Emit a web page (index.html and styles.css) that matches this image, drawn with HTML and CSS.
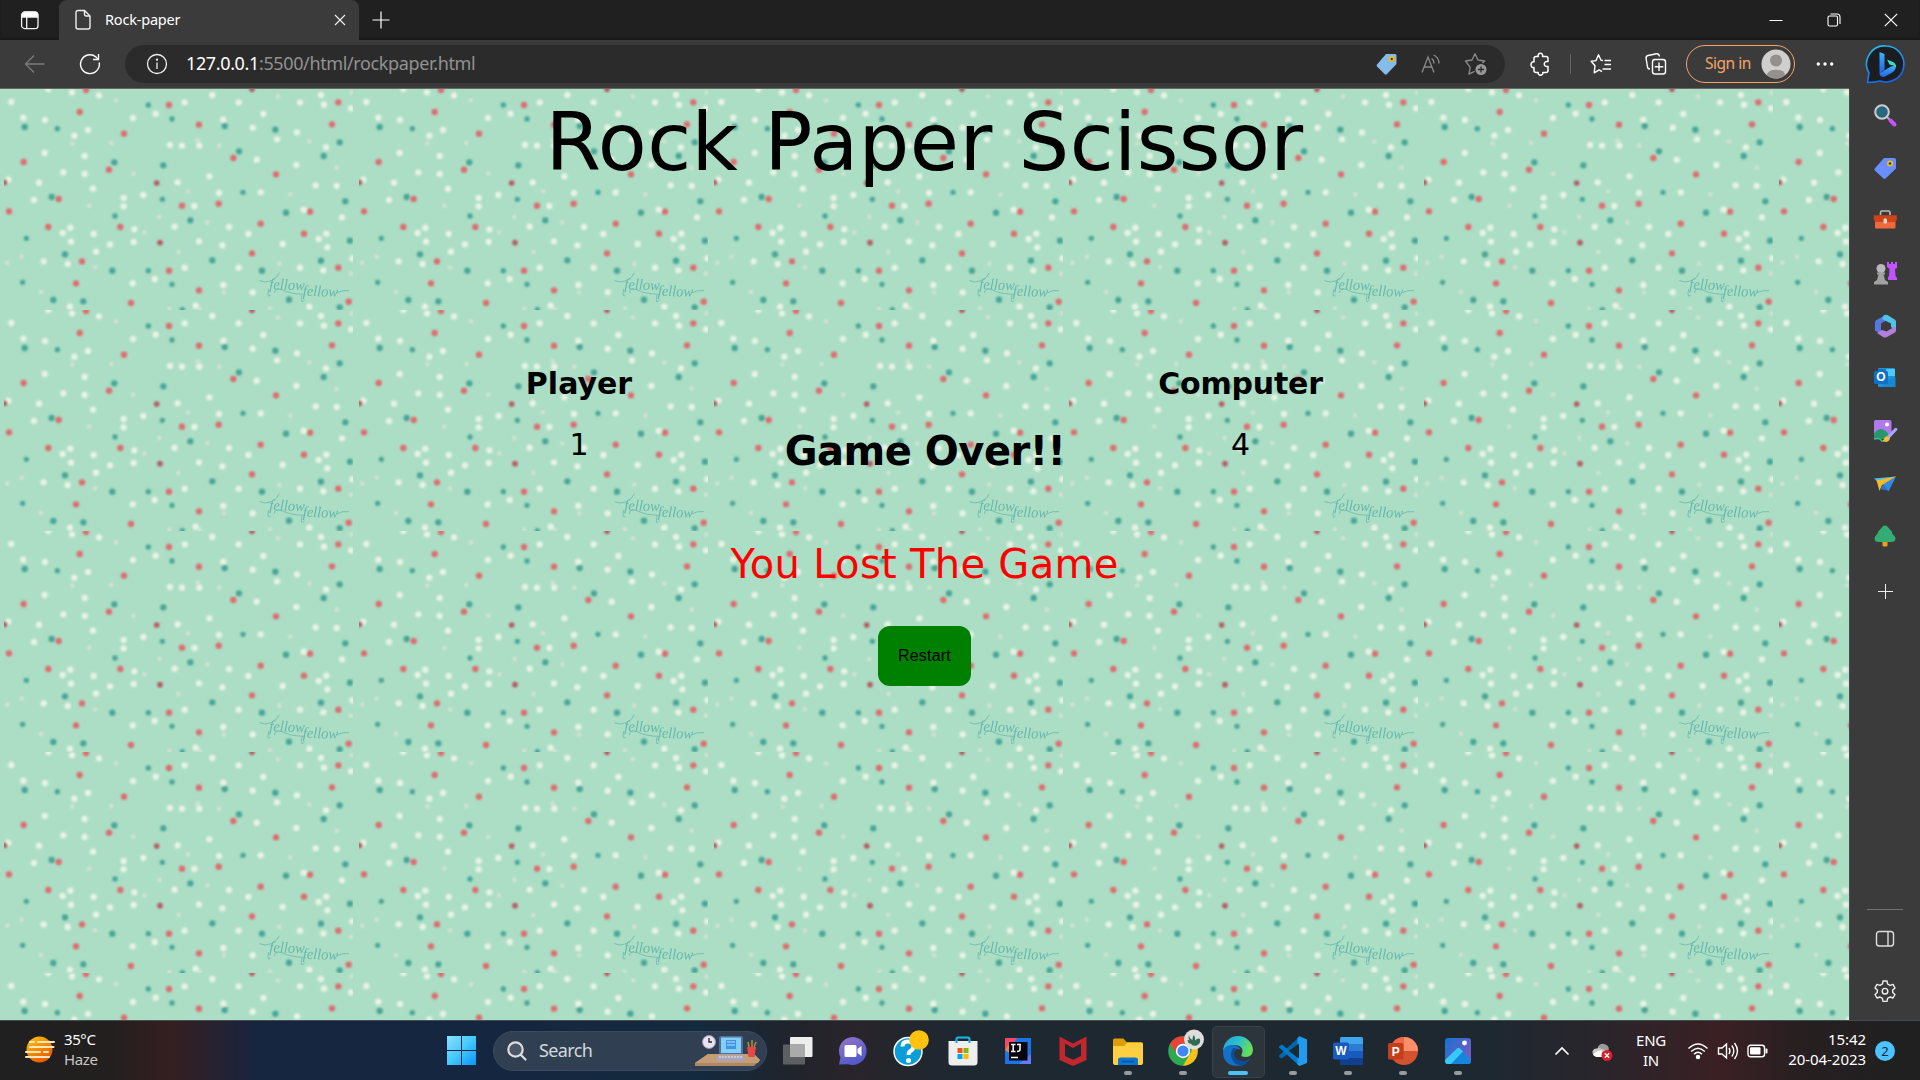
FILE: index.html
```html
<!DOCTYPE html>
<html lang="en">
<head>
<meta charset="utf-8">
<title>Rock-paper</title>
<link rel="stylesheet" href="styles.css">
</head>
<body>
<div class="desktop">
  <header class="tabbar">
    <div class="tab-actions"><svg width="20" height="20" viewBox="0 0 20 20" fill="none" stroke="#f4f4f4" stroke-width="1.3"><rect x="1.6" y="2.2" width="16.4" height="16.4" rx="3.2"/><path d="M2 7V5a3 3 0 0 1 3-3h9.600a3 3 0 0 1 3 3v2z" fill="#fff"/><path d="M6.700 7v11"/></svg></div>
    <div class="tab">
      <svg width="18" height="22" viewBox="0 0 18 22" fill="none" stroke="#eee" stroke-width="1.400"><path d="M4 1.500h6.500l5.500 5.500v11a2 2 0 0 1-2 2H4a2 2 0 0 1-2-2V3.500a2 2 0 0 1 2-2z"/><path d="M10.500 1.500V5.500a1.500 1.500 0 0 0 1.500 1.500h4"/></svg>
      <span class="tab-title">Rock-paper</span>
      <svg class="tab-close" width="12" height="12" viewBox="0 0 12 12" stroke="#eee" stroke-width="1.200"><path d="M1 1l10 10M11 1L1 11"/></svg>
    </div>
    <svg class="new-tab" width="18" height="18" viewBox="0 0 18 18" stroke="#fff" stroke-width="1.200"><path d="M9 .5v17M.5 9h17"/></svg>
    <div class="window-controls">
      <svg width="14" height="14" viewBox="0 0 14 14" stroke="#fff" stroke-width="1"><path d="M.5 7.500h13"/></svg>
      <svg width="14" height="14" viewBox="0 0 14 14" fill="none" stroke="#fff" stroke-width="1.100"><rect x="1" y="3" width="9.500" height="10" rx="1.500"/><path d="M3.500 1h6.500a3 3 0 0 1 3 3v7"/></svg>
      <svg width="14" height="14" viewBox="0 0 14 14" stroke="#fff" stroke-width="1.200"><path d="M.8 .8l12.400 12.400M13.200 .8L.8 13.200"/></svg>
    </div>
  </header>

  <nav class="toolbar">
    <svg class="back" width="22" height="20" viewBox="0 0 22 20" fill="none" stroke="#7c7c7c" stroke-width="1.300"><path d="M20.500 10H1.500M10 1.500L1.500 10l8.500 8.500"/></svg>
    <svg class="reload" width="22" height="22" viewBox="0 0 22 22" fill="none" stroke="#fff" stroke-width="1.400"><path d="M20.200 9.500A9.400 9.400 0 1 1 17 4l2 2"/><path d="M19.500 1v5.500h-5.500"/></svg>
    <div class="address">
      <svg width="22" height="22" viewBox="0 0 22 22" fill="none" stroke="#eee" stroke-width="1.300"><circle cx="11" cy="11" r="9.500"/><path d="M11 9.500v6.500"/><circle cx="11" cy="6.700" r=".5" fill="#eee"/></svg>
      <span class="url"><b>127.0.0.1</b>:5500/html/rockpaper.html</span>
      <div class="address-icons">
        <svg width="22" height="22" viewBox="0 0 22 22"><path d="M10 1h9a1.500 1.500 0 0 1 1.500 1.500v8.500L10.500 21.500Q9.500 22 8.500 21L1 13.500Q.2 12.500 1 11.500z" fill="#86bce9"/><circle cx="15.800" cy="6" r="2.900" fill="#f3b614"/><circle cx="15.800" cy="6" r="1.100" fill="#222"/></svg>
        <svg width="20" height="20" viewBox="0 0 20 20" fill="none" stroke="#8b8b8b" stroke-width="1.300"><path d="M1 18.500L7 3l6 15.500M3.200 13h7.600"/><path d="M10.500 4.500q2.500 1.500 2.500 5M12.500 1q5.500 2.500 5.500 8.500"/></svg>
        <svg width="24" height="24" viewBox="0 0 24 24"><path d="M11 1.800l3 6.200 6.600 1-4.800 4.700-.8 7.800-4-2.400-6 3 1.200-6.700L1.500 9 8 8z" fill="none" stroke="#8b8b8b" stroke-width="1.300" stroke-linejoin="round"/><circle cx="17" cy="17.500" r="6.800" fill="#2b2b2b"/><circle cx="17" cy="17.500" r="5.500" fill="#999"/><path d="M17 14.500v6M14 17.500h6" stroke="#2b2b2b" stroke-width="1.300"/></svg>
      </div>
    </div>
    <svg class="puzzle" width="20" height="24" viewBox="0 0 20 24" fill="none" stroke="#fff" stroke-width="1.500" stroke-linejoin="round"><path d="M4 6.500Q4 4.500 6 4.500H8.300C6.700 .3 14 .3 12.500 4.500H16Q18 4.500 18 6.500V9.500C13 8.500 13 15.500 18 14.500V18.500Q18 20.500 16 20.500H12.800C13.500 24 7.500 24 8.200 20.500H6Q4 20.500 4 18.500V15.500C0 16.500 0 8.800 4 9.800z"/></svg>
    <i class="divider"></i>
    <svg class="favorites" width="22" height="22" viewBox="0 0 22 22" fill="none" stroke="#fff" stroke-width="1.400" stroke-linejoin="round"><path d="M13 7.500l-2-.3-2.500-5.400L6 7.600 1.200 8.200 5 12.700 4.200 19.800l5-2.900 2.800 1.800M14.500 7.500h6.500M14.500 11.500h6.500M12.500 16h8.500"/></svg>
    <svg class="collections" width="22" height="24" viewBox="0 0 22 24" fill="none" stroke="#fff" stroke-width="1.400"><path d="M5 17Q2.500 17 2.400 14.500L1.100 6.500Q.8 4 3 3.500L11.500 1.700Q14 1.500 14.500 4.500"/><rect x="7.500" y="7.500" width="13" height="14.500" rx="2.500"/><path d="M14 10.500v8.500M9.800 14.700h8.500"/></svg>
    <div class="signin"><span>Sign in</span><svg width="30" height="30" viewBox="0 0 30 30"><circle cx="15" cy="15" r="14.500" fill="#d1cfcd"/><circle cx="15" cy="11.500" r="6" fill="#93908d"/><path d="M5.500 26a9.800 7 0 0 1 19 0 14.500 14.500 0 0 1-19 0z" fill="#93908d"/></svg></div>
    <svg class="more" width="18" height="4" viewBox="0 0 18 4" fill="#fff"><circle cx="2.300" cy="2" r="1.700"/><circle cx="9" cy="2" r="1.700"/><circle cx="15.700" cy="2" r="1.700"/></svg>
    <svg class="bing" width="40" height="40" viewBox="0 0 40 40"><defs><linearGradient id="bingRing" x1="0" y1="0" x2=".4" y2="1"><stop offset="0" stop-color="#20c8f5"/><stop offset="1" stop-color="#1766e8"/></linearGradient><linearGradient id="bingB" x1="0" y1="0" x2="0" y2="1"><stop offset="0" stop-color="#3bb4ff"/><stop offset="1" stop-color="#2360e8"/></linearGradient></defs><path d="M20 2A18 18 0 1 1 14 37Q8 38.500 1.500 38.500L3 29A18 18 0 0 1 20 2z" fill="#1c1d20" stroke="url(#bingRing)" stroke-width="1.600"/><path d="M13.500 8l5 2v16l-5 3.500z" fill="url(#bingB)"/><path d="M13.500 29.500l11.500-7 5-1q0 5-4.500 7.500L18 33q-4 0-4.500-3.500z" fill="url(#bingB)"/><path d="M21 15.500l6 2.500q3.500 2 3 5.500-1-2-5-2.500l-1.500-.5z" fill="#37e0c8"/></svg>
  </nav>

  <div class="browser-body">
    <main class="game">
      <svg class="confetti" width="1849" height="931" aria-hidden="true">
        <defs>
          <filter id="soft" x="0" y="0" width="1" height="1"><feGaussianBlur stdDeviation="2.600"/></filter>
          <pattern id="tile" width="1065" height="663" patternUnits="userSpaceOnUse" patternTransform="scale(.333333)">
            <rect width="1065" height="663" fill="#abdec5"/>
            <g id="dots" stroke-linecap="round" fill="none" filter="url(#soft)">
              <path class="dot cream" d="M145 0h0M297 19h0M34 39h0M216 10h0M554 40h0M637 18h0M716 40h0M900 40h0M963 18h0M972 47h0M1053 58h0M467 74h0M399 87h0M790 75h0M70 86h0M135 93h0M264 123h0M223 140h0M670 92h0M758 116h0M891 130h0M831 151h0M134 192h0M254 201h0M510 168h0M546 170h0M598 170h0M770 212h0M889 228h0M190 250h0M254 255h0M25 272h0M117 281h0M279 299h0M371 327h0M371 352h0M430 318h0M533 280h0M628 262h0M657 312h0M782 310h0M947 289h0M1010 291h0M102 333h0M583 351h0M524 413h0M211 416h0M188 432h0M281 435h0M403 421h0M401 459h0M330 466h0M213 458h0M745 435h0M687 414h0M911 362h0M1026 385h0M979 434h0M956 450h0M982 475h0M597 457h0M667 469h0M848 465h0M288 488h0M131 517h0M203 525h0M716 536h0M900 536h0M554 536h0M970 544h0M1057 508h0M398 583h0M670 588h0M758 610h0M464 570h0M210 653h0M587 650h0M928 653h0M978 175h0"/>
              <path class="dot small" d="M348 34h0M1055 10h0M834 22h0M217 163h0M334 162h0M593 154h0M658 170h0M400 254h0M564 307h0M871 316h0M1010 236h0M928 157h0M268 350h0M478 384h0M433 430h0M535 489h0M622 400h0M22 521h0M65 503h0M285 535h0M838 524h0M1053 554h0M123 609h0M672 610h0M508 660h0M810 658h0M600 660h0"/>
              <path class="dot coral" d="M258 3h0M507 48h0M1015 40h0M239 69h0M372 134h0M597 107h0M996 106h0M71 219h0M327 242h0M700 207h0M828 256h0M176 330h0M546 350h0M656 344h0M27 367h0M930 368h0M782 404h0M145 414h0M361 414h0M912 434h0M756 493h0M246 517h0M507 545h0M1015 536h0M228 583h0M597 604h0M393 642h0M1046 638h0"/>
              <path class="dot wine" d="M470 282h0M480 461h0M14 280h0M756 1h0"/>
              <path class="dot teal" d="M343 220h0M490 229h0M674 111h0M74 114h0M826 122h0M1019 160h0M717 187h0M971 201h0M155 324h0M1036 337h0M858 371h0M571 394h0M1050 455h0M195 496h0M637 514h0M963 515h0M337 545h0M786 545h0M250 637h0M867 632h0M1019 655h0M160 633h0"/>
              <path class="dot teal mini" d="M445 48h0M516 90h0M172 119h0M487 331h0M729 310h0M345 381h0M79 448h0M445 545h0M516 586h0M68 580h0M547 662h0"/>
            </g>
            <g class="wordmark">
              <text x="808" y="600" textLength="106" lengthAdjust="spacingAndGlyphs" transform="rotate(2 808 600)">fellow</text>
              <text x="908" y="620" textLength="106" lengthAdjust="spacingAndGlyphs" transform="rotate(2 908 620)">fellow</text>
              <path d="M778 575q18 8 36 0t24-24M824 612q-2-16 22-10 26 14 70 14M1010 612q16-10 37-7M806 600q-6 30 6 18M906 618q-6 32 8 14" fill="none" stroke="#66b8ac" stroke-width="2.400"/>
            </g>
          </pattern>
        </defs>
        <rect width="1849" height="931" fill="url(#tile)"/>
      </svg>
      <div class="board">
        <h1>Rock Paper Scissor</h1>
        <div class="scores">
          <section class="score"><h2 class="player">Player</h2><p>1</p></section>
          <h2 class="over">Game Over!!</h2>
          <section class="score"><h2 class="computer">Computer</h2><p>4</p></section>
        </div>
        <p class="result">You Lost The Game</p>
        <button class="restart">Restart</button>
      </div>
    </main>

    <aside class="sidebar">
      <svg viewBox="0 0 24 24"><path d="M14 14l3 3" stroke="#aaa" stroke-width="2"/><circle cx="9" cy="9" r="6.800" fill="#2b6681" stroke="#c9cdcf" stroke-width="2"/><path d="M17.500 17.500l4 4" stroke="#c653ff" stroke-width="4" stroke-linecap="round"/></svg>
      <svg viewBox="0 0 24 24"><path d="M11 2h10q2 0 2 2v8.500L12.500 22.500q-1 .8-2 0L1.800 14.500q-1-1 0-2z" fill="#6b8eff"/><circle cx="17" cy="7.500" r="3" fill="#f2c10f"/><circle cx="17" cy="7.500" r="1.300" fill="#333"/></svg>
      <svg viewBox="0 0 24 24"><path d="M7.500 7V4.500Q7.500 3 9 3h6.500Q17 3 17 4.500V7" fill="none" stroke="#bbb" stroke-width="1.600"/><rect x="2" y="9" width="20.500" height="11.500" rx="1" fill="#f0693d"/><path d="M.8 7.300h23V12l-2 2H3l-2.200-2z" fill="#cf4317"/><rect x="10.500" y="10.500" width="3.500" height="5" rx="1" fill="#d6d6d6"/></svg>
      <svg viewBox="0 0 24 24"><path d="M14 1h2v2h2V1h2v2h2V1h2v6l-2 1 .5 7 1.500 2v2h-9v-3l1-1 .5-7-2.500-2z" fill="#c154ff"/><circle cx="8" cy="7.500" r="4.500" fill="#b8b8b8"/><path d="M4 11.500h8v2h-1.500L12 19l3 2v2.500H1V21l3-2 1.500-5.500H4z" fill="#a2a2a2"/></svg>
      <svg viewBox="0 0 24 24"><path d="M13 .8L3 6.200Q2 7 2 8.500v8L9 21l2-1.500-3-3V9.500l5-3z" fill="#5878df"/><path d="M11 1l3-.2 8 5q1 .8 1 2V16l-5-3V9.500L9 5z" fill="#4fc3e8"/><path d="M23 13v3.500q0 1.200-1 2l-8.500 4.700q-1.500.6-3 0L4 19l5-3 4.500 1.500 5-3z" fill="#b47edb"/></svg>
      <svg viewBox="0 0 24 24"><rect x="5" y="2" width="17" height="19" rx="1" fill="#1c93dd"/><path d="M5 3h8v7H5z" fill="#1474bd"/><path d="M13 3h9v7h-9z" fill="#4fc8f4"/><path d="M13 13.500l9.500-2V21H9z" fill="#1689d3"/><rect x="1" y="5" width="14" height="13" rx="1.500" fill="#0f70c8"/><text x="8" y="15.200" class="glyph">O</text></svg>
      <svg viewBox="0 0 24 24"><rect x="1" y="1" width="17.500" height="17" rx="2" fill="#b279ec"/><circle cx="14" cy="5.500" r="2" fill="#fff"/><path d="M1 15q7-11 16 2v3H1z" fill="#25976a"/><path d="M1 20q5-1.500 7 1t3 0" fill="none" stroke="#3ac487" stroke-width="1.500"/><path d="M14 17l8-8q1-.8 2 .2t0 2l-7.500 8z" fill="#a8a5ff"/><path d="M10 22q2-6 5-4.500t1 4-6 .5z" fill="#f6bd35"/></svg>
      <svg viewBox="0 0 24 24"><path d="M1 6.500L23 4.500 7 12z" fill="#4bc0f5"/><path d="M23 4.500L15.500 19.500 9 12z" fill="#318be6"/><path d="M3.500 8.500L23 4.500 9 13l-2.500 6z" fill="#f4bb27"/><path d="M7 17l3-4 4.500 5.500z" fill="#2876ce"/></svg>
      <svg viewBox="0 0 24 24"><path d="M9.500 17h5v4.500q0 1-1 1h-3q-1 0-1-1z" fill="#f19d19"/><path d="M12 1.500c2 0 3 1.500 4 3s3 2 3 4 3.500 3.500 3.500 6-2 3.500-4 3.500h-13c-2 0-4-1-4-3.500s3-4 3.500-6 2-2.500 3-4 2-3 4-3z" fill="#32ae74"/></svg>
      <svg class="add" viewBox="0 0 24 24" stroke="#eee" stroke-width="1"><path d="M12.500 5v15M5 12.500h15"/></svg>
      <div class="sidebar-bottom">
        <svg viewBox="0 0 24 24" fill="none" stroke="#ddd" stroke-width="1.400"><rect x="3.500" y="4.500" width="17" height="14.500" rx="2.800"/><path d="M15 5v14"/></svg>
        <svg viewBox="0 0 24 24" fill="none" stroke="#eee" stroke-width="1.400" stroke-linejoin="round"><path d="M10 2h4l.6 3 2.400 1.400 3-1 2 3.600-2.300 2v2.500l2.300 2-2 3.500-3-1-2.400 1.400-.6 3h-4l-.6-3L7 18l-3 1-2-3.500 2.300-2V11L2 9l2-3.600 3 1L9.400 5z"/><circle cx="12" cy="12.200" r="2.800"/></svg>
      </div>
    </aside>
  </div>

  <footer class="taskbar">
    <div class="weather">
      <svg width="32" height="28" viewBox="0 0 32 28"><defs><linearGradient id="sun" x1="0" y1="0" x2=".6" y2="1"><stop offset="0" stop-color="#ffc800"/><stop offset="1" stop-color="#e85a00"/></linearGradient></defs><circle cx="15.500" cy="12.500" r="13" fill="url(#sun)"/><path d="M6 5h4M14 5h16M6 10h23.500M2 15h14M20 15h4M2 20h23" stroke="#fbe6bd" stroke-width="2.100" stroke-linecap="round"/></svg>
      <div class="weather-text"><div>35°C</div><div class="muted">Haze</div></div>
    </div>
    <svg class="start" width="29" height="29" viewBox="0 0 29 29"><defs><linearGradient id="win" x1="0" y1="0" x2="29" y2="29" gradientUnits="userSpaceOnUse"><stop offset="0" stop-color="#8be0ff"/><stop offset=".5" stop-color="#45c8fc"/><stop offset="1" stop-color="#0a95fc"/></linearGradient></defs><path d="M0 0h14v14H0zM15 0h14v14H15zM0 15h14v14H0zM15 15h14v14H15z" fill="url(#win)"/></svg>
    <div class="search">
      <svg width="20" height="20" viewBox="0 0 20 20" fill="none" stroke="#ddd" stroke-width="2.200"><circle cx="8.500" cy="8.500" r="7.200" fill="#4a5767"/><path d="M13.500 13.500l5 5" stroke-linecap="round"/></svg>
      <span>Search</span>
      <svg class="desk" width="66" height="32" viewBox="0 0 66 32"><path d="M0 28L13 19H59l6 6-6 6H0z" fill="#ae8865"/><path d="M13 19h46l6 6-2 3H0z" fill="#c49d75"/><circle cx="14" cy="7" r="6.500" fill="#e9e4ef" stroke="#9d92ba"/><path d="M14 3v4h3" stroke="#222" fill="none" stroke-width="1.300"/><rect x="24" y="1" width="24" height="18" rx="1.500" fill="#566f94"/><rect x="26" y="2.500" width="20" height="15.500" fill="#7fd0fb"/><path d="M31 5h10v9H31z" fill="#4097df"/><path d="M32 7h8M32 10h8" stroke="#b5e2ff"/><path d="M23 20h26l1 6H21z" fill="#a9a3bc"/><path d="M24 22h23" stroke="#eee" stroke-dasharray="2 1"/><path d="M54 12l-1-5M57 12V5M59 12l2-5" stroke="#b68f35" stroke-width="1.500"/><path d="M52 12h9l-1.500 10h-6z" fill="#e84545"/></svg>
    </div>
    <div class="apps">
      <div class="app"><svg viewBox="0 0 30 30"><rect x="7" y="1" width="22.500" height="20" rx="1" fill="#eee"/><rect x="0" y="8.500" width="22" height="20" rx="1" fill="#5c6063"/><path d="M7 8.500h15V21H7z" fill="#a9aaab"/></svg></div>
      <div class="app"><svg viewBox="0 0 30 30"><defs><linearGradient id="chat" x1="0" y1="0" x2=".5" y2="1"><stop offset="0" stop-color="#9476c8"/><stop offset="1" stop-color="#5059c9"/></linearGradient></defs><path d="M15 1a14 14 0 1 1-5 27.200L1 28.500l1.500-7A14 14 0 0 1 15 1z" fill="url(#chat)"/><path d="M8 9h9q1.500 0 1.500 1.500v9Q18.500 21 17 21H8q-1.500 0-1.500-1.500v-9Q6.500 9 8 9zM19.500 13l4-3v10l-4-3z" fill="#fff"/></svg></div>
      <div class="app"><svg viewBox="0 0 30 30"><circle cx="15" cy="15.500" r="14" fill="#099dd9" stroke="#fff" stroke-width="1.500"/><path d="M9.500 10.500q0-5 5.500-5t5.500 4.700q0 3-3 4.800-2 1.300-2 4" fill="none" stroke="#fff" stroke-width="4"/><circle cx="15.500" cy="24.500" r="2.500" fill="#fff"/><circle cx="26" cy="4" r="9.800" fill="#ffc20f"/></svg></div>
      <div class="app"><svg viewBox="0 0 30 30"><path d="M8.500 6V3q0-1.500 1.500-1.500h10q1.500 0 1.500 1.500v3" fill="none" stroke="#1db7ee" stroke-width="2"/><path d="M.5 5h29v21q0 3.500-3.500 3.500H4Q.5 29.500.5 26z" fill="#eee"/><path d="M8.500 7V4M21.500 7V4" stroke="#0ba2dd" stroke-width="2"/><path d="M9.500 12h5v5h-5z" fill="#f25022"/><path d="M15.500 12h5v5h-5z" fill="#7fba00"/><path d="M9.500 18h5v5h-5z" fill="#00a4ef"/><path d="M15.500 18h5v5h-5z" fill="#ffb900"/></svg></div>
      <div class="app"><svg viewBox="0 0 30 30"><path d="M2 2h26v26H2z" fill="#1b74e8"/><path d="M2 2h12L5 16 2 12z" fill="#f34969"/><path d="M2 14l4-6v9z" fill="#ee8540"/><path d="M16 28h12V18z" fill="#647bf4"/><path d="M6 6h18.500v18.500H6z" fill="#08050d"/><path d="M8 8.500h4.500M10.200 8.500v7M8 15.500h4.500M14 8.500h4M17 8.500v5q0 2-3 2M8 21.500h7" stroke="#fff" stroke-width="1.500" fill="none"/></svg></div>
      <div class="app"><svg viewBox="0 0 30 30"><path d="M1.500 .5L15 7.500 28.500 .5V24L15 30 1.500 24zM7 7.500V20l8 3.800L23 20V7.500L15 12z" fill="#c1272d" fill-rule="evenodd"/></svg></div>
      <div class="app on"><svg viewBox="0 0 30 30"><path d="M0 4q0-1.500 1.500-1.500h9l3 3.500H28q2 0 2 2v4H0z" fill="#dc9d08"/><path d="M0 10h11l3-3h14.500Q30 7 30 8.500V27q0 2-2 2H2q-2 0-2-2z" fill="#ffcf42"/><path d="M5 29v-5q0-2.500 2.500-2.500h15q2.500 0 2.500 2.500v5z" fill="#0f76cf"/><path d="M9 25.500h12" stroke="#09569c" stroke-width="1.500"/></svg></div>
      <div class="app on"><svg viewBox="0 0 30 30"><circle cx="15" cy="15" r="14.800" fill="#2da94f"/><path d="M15 .2A14.800 14.800 0 0 1 27.800 7.600H15a7.400 7.400 0 0 0-6.400 11.100L2.200 7.600A14.800 14.800 0 0 1 15 .2z" fill="#ea4335"/><path d="M27.800 7.600a14.800 14.800 0 0 1-12.800 22.200l6.400-11.100a7.400 7.400 0 0 0 0-11.100z" fill="#fbc116"/><circle cx="15" cy="15" r="7.200" fill="#fff"/><circle cx="15" cy="15" r="5.600" fill="#4285f4"/><circle cx="26" cy="3.500" r="10" fill="#dedddd"/><path d="M21-1.500q0 4 3.500 5.500 0-4 1.500-5 1.500 3 1 5.500 3-3 5-1.500 1 5-3.500 6.500-4 1-5.500-1.500-3-.5-3.500-3.500 1-1 2 0-1.500-3-.5-6z" fill="#316b52"/></svg></div>
      <div class="app on active"><svg viewBox="0 0 30 30"><defs><linearGradient id="edgeTop" x1="0" y1="0" x2="1" y2=".35"><stop offset="0" stop-color="#239fe1"/><stop offset=".55" stop-color="#2dc2c8"/><stop offset="1" stop-color="#67dd58"/></linearGradient></defs><path d="M15 0A15 15 0 0 1 30 14q-.5 7-7 7-5.500 0-4.500-2.500 2-3.500 0-6.500-2-3-6.500-3Q4 9 0 15A15 15 0 0 1 15 0z" fill="url(#edgeTop)"/><path d="M0 15q2-6 9.500-6 6 0 8 4.500-4-1.500-6 1.500-2.500 4 1 8.500 6 5 14 0Q22 30 15 30 0 30 0 15z" fill="#1471c8"/><path d="M10 12q-4 7 0 13 2.500 4 8 4.800Q24 28 27 23q-7 3.500-12.500.5-4.500-3.500-3.500-8 1-2.500 3-3z" fill="#0e4d95"/></svg></div>
      <div class="app on"><svg viewBox="0 0 30 30"><path d="M1 19.500L21.500 .5 22.500 7 4 22.500 1 21z" fill="#0065a9"/><path d="M1 10.500l3-2L22.500 24l-1 6L1 11.500z" fill="#007acc"/><path d="M21.500 .2L29 3.500v23.500l-7.500 3-2-1.500V2z" fill="#1f9cf0"/><path d="M11 15l10-7.500v15z" fill="#1e2830"/></svg></div>
      <div class="app on"><svg viewBox="0 0 30 30"><rect x="7" y="1" width="23" height="28" rx="1.500" fill="#185abd"/><path d="M7 2.500Q7 1 8.500 1H28.500Q30 1 30 2.500V8H7z" fill="#41a5ee"/><path d="M7 8h23v7H7z" fill="#2b7cd3"/><path d="M7 22h23v5.500Q30 29 28.500 29h-20Q7 29 7 27.500z" fill="#103f91"/><rect x="0" y="6.500" width="16" height="17" rx="1.500" fill="#185abd"/><text x="8" y="19" class="glyph">W</text></svg></div>
      <div class="app on"><svg viewBox="0 0 30 30"><circle cx="16" cy="15" r="14" fill="#d35230"/><path d="M16 1v14h14A14 14 0 0 0 16 1z" fill="#ff8f6b"/><path d="M16 1A14 14 0 0 0 2 15h14z" fill="#ed6c47"/><rect x="0" y="7" width="15.500" height="16.500" rx="1.500" fill="#c43e1c"/><text x="7.700" y="19.500" class="glyph">P</text></svg></div>
      <div class="app on"><svg viewBox="0 0 30 30"><defs><linearGradient id="photo" x1="0" y1="0" x2="1" y2=".8"><stop offset="0" stop-color="#1374d1"/><stop offset="1" stop-color="#7e58c2"/></linearGradient></defs><rect x="2" y="2" width="26" height="26" rx="3" fill="url(#photo)"/><circle cx="21.500" cy="7" r="2.400" fill="#fff"/><path d="M2 24L14 12.500q1.500-1.500 3 0L28 24v1q0 3-3 3H5q-3 0-3-3z" fill="#1685dd"/><path d="M2 24L14 12.500q1.500-1.500 3 0l3 3L8 28H5q-3 0-3-3z" fill="#38c9f5"/></svg></div>
    </div>
    <div class="tray">
      <svg width="16" height="10" viewBox="0 0 16 10" fill="none" stroke="#fff" stroke-width="1.700"><path d="M1.500 8.500L8 2l6.500 6.500"/></svg>
      <svg class="cloud" width="22" height="20" viewBox="0 0 22 20"><path d="M4 15q-4-1-3.500-4.500Q1.500 7 5.500 7.500 8 2 13 4q4 1.500 3 6z" fill="#c9c9c9"/><path d="M5.500 6.500q3-5.500 8-3t2.500 6.500z" fill="#999"/><path d="M1 14q4-5 9-4v6H4z" fill="#fff"/><circle cx="15" cy="14.500" r="5.500" fill="#dc1c2b"/><path d="M12.800 12.300l4.400 4.400M17.200 12.300l-4.400 4.400" stroke="#fff" stroke-width="1.400"/></svg>
      <div class="lang"><div>ENG</div><div>IN</div></div>
      <svg class="wifi" width="22" height="18" viewBox="0 0 22 18" fill="none" stroke="#fff" stroke-width="1.500"><path d="M1.500 6.500q9.500-9 19 0M4.200 9.500q6.800-6.500 13.600 0M7 12.300q4-4 8 0"/><circle cx="11" cy="15" r="1.500" fill="#fff"/></svg>
      <svg class="volume" width="22" height="20" viewBox="0 0 22 20" fill="none" stroke="#fff" stroke-width="1.400"><path d="M1.500 7h3.500l4.500-4v14L5 13H1.500zM12 7q2 3 0 6M14.800 4.500q4 5.500 0 11M17.500 2q6 8 0 16"/></svg>
      <svg class="battery" width="21" height="14" viewBox="0 0 21 14"><rect x="1" y="1.200" width="16.500" height="11.500" rx="2.500" fill="none" stroke="#fff" stroke-width="1.400"/><rect x="3" y="3.300" width="10.500" height="7.300" rx="1" fill="#fff"/><path d="M18.500 4.500h1q1 0 1 1v3q0 1-1 1h-1z" fill="#fff"/></svg>
      <div class="clock"><div>15:42</div><div class="date">20-04-2023</div></div>
      <span class="count">2</span>
    </div>
  </footer>
</div>
</body>
</html>
```
FILE: styles.css
```css
* { box-sizing: border-box; }
body { margin: 0; background: #202020; font-family: "Noto Sans", "Open Sans", sans-serif; color: #fff; }
h1, h2, p { margin: 0; }
svg { display: block; flex: none; overflow: visible; }
.desktop { width: 1920px; height: 1080px; display: flex; flex-direction: column; overflow: hidden; }

.tabbar { height: 40px; display: flex; align-items: center; background: #202020; box-shadow: inset 0 -2px 2px #191919; }
.tab-actions { width: 59px; padding-left: 20px; }
.tab { width: 300px; height: 40px; display: flex; align-items: center; background: #3b3b3b; border-radius: 8px 8px 0 0; padding: 0 13px 0 15px; }
.tab-title { margin: -2px 0 0 13px; font-size: 14.500px; letter-spacing: -.2px; line-height: 20px; }
.tab-close { margin-left: auto; }
.new-tab { margin-left: 13px; }
.window-controls { display: flex; gap: 43.500px; margin-left: auto; padding-right: 22px; }

.toolbar { height: 49px; display: flex; align-items: center; background: #3b3b3b; padding-bottom: 1px; }
.back { margin-left: 24px; }
.reload { margin-left: 33px; }
.address { width: 1380px; height: 38px; margin-left: 24px; padding-left: 21px; display: flex; align-items: center; border-radius: 19px; background: #2b2b2b; }
.url { margin: -2px 0 0 18px; color: #929292; font-size: 18px; line-height: 24px; letter-spacing: -.37px; }
.url b { color: #fff; font-weight: 400; }
.address-icons { display: flex; align-items: center; gap: 23px; margin-left: auto; padding-right: 17px; }
.puzzle { margin-left: 25px; }
.divider { width: 1px; height: 20px; margin-left: 20px; background: #666; }
.favorites { margin-left: 19px; }
.collections { margin-left: 33px; }
.signin { width: 109px; height: 38px; margin-left: 19px; padding: 0 3px 0 18px; display: flex; align-items: center; justify-content: space-between; border: 1.500px solid #f4a469; border-radius: 19px; color: #f4a469; font-size: 15.500px; letter-spacing: -.5px; }
.signin span { margin-top: -2px; }
.more { margin-left: 21px; }
.bing { margin-left: 32px; }

.browser-body { height: 932px; display: flex; }
.game { position: relative; width: 1849px; height: 932px; border-top: 1px solid #686868; margin-top: -1px; color: #000; font-family: "DejaVu Sans", Verdana, sans-serif; }
.confetti { position: absolute; inset: 0; }
.dot { stroke: #e9f3e4; stroke-width: 19; }
.dot.small { stroke: #d9e2d0; stroke-width: 13; }
.dot.coral { stroke: #de6c70; stroke-width: 19; }
.dot.wine { stroke: #b65c67; stroke-width: 17; }
.dot.teal { stroke: #48a596; stroke-width: 19; }
.dot.mini { stroke-width: 16; }
.wordmark text { font: italic 46px "Liberation Serif", serif; fill: #66b8ac; }
.board { position: relative; height: 931px; display: flex; flex-direction: column; align-items: center; }
h1 { height: 100px; margin-top: 4px; font-size: 80px; line-height: 100px; font-weight: 400; letter-spacing: .4px; white-space: nowrap; }
.scores { width: 797px; height: 199px; margin-top: 171px; display: grid; grid-template-columns: 106px 1fr 165px; }
.score { display: flex; flex-direction: column; align-items: center; font-size: 30px; line-height: 40px; }
.score h2 { font-size: 30px; line-height: 40px; }
.score .computer { letter-spacing: -.2px; }
.score p { margin-top: 21px; }
.over { margin: 62px -60px 0 0; font-size: 40px; line-height: 50px; letter-spacing: -.5px; text-align: center; }
.result { margin-top: -24px; color: red; font-size: 40px; line-height: 50px; letter-spacing: .3px; }
.restart { width: 93px; height: 60px; margin-top: 37px; border: 0; border-radius: 12px; background: #008000; color: #000; font: 16px "Liberation Sans", Arial, sans-serif; letter-spacing: .2px; }

.sidebar { width: 71px; background: #3b3b3b; border-left: 1px solid #4a4a4a; display: flex; flex-direction: column; align-items: center; gap: 28.700px; padding: 14px 1px 0 0; }
.sidebar svg { width: 24px; height: 24px; }
.sidebar .add { margin-top: 2px; }
.sidebar-bottom { margin-top: auto; border-top: 1px solid #707070; width: 36px; height: 111px; padding-top: 17px; display: flex; flex-direction: column; align-items: center; gap: 28px; }
.glyph { font: bold 12px "Liberation Sans", sans-serif; fill: #fff; text-anchor: middle; }

.taskbar { height: 60px; display: flex; align-items: center; border-top: 1px solid #454b50; font-size: 15px; line-height: 20px; background: linear-gradient(90deg, #202020 0, #231f1f 110px, #351f20 170px, #272130 215px, #162540 260px, #152640 480px, #142a3e 700px, #20242c 790px, #29242a 850px, #1e2831 960px, #1e2831 1490px, #29252b 1600px, #3a2023 1720px, #271f21 1800px, #202020 1900px); }
.weather { width: 447px; display: flex; align-items: center; gap: 8px; padding-left: 24px; letter-spacing: -.4px; }
.weather-text { margin-top: -4px; }
.muted { color: #c8c8c8; }
.search { width: 274px; height: 40px; margin-left: 17px; padding-left: 13px; border: 1px solid #3c4b5b; border-radius: 20px; display: flex; align-items: center; background: #304052; font-size: 18px; letter-spacing: -.6px; color: #d3d7db; }
.search span { margin: -2px 0 0 12px; }
.desk { margin: 0 5px 0 auto; }
.apps { display: flex; margin-left: 3px; }
.app { position: relative; width: 55px; height: 50px; display: flex; align-items: center; justify-content: center; }
.app svg { width: 30px; height: 30px; }
.on::after { content: ""; position: absolute; left: 24px; bottom: 1px; width: 8px; height: 4px; border-radius: 2px; background: #979b9e; }
.active::before { content: ""; position: absolute; left: 2px; top: 0; width: 51px; height: 50px; border-radius: 5px; border: 1px solid #3a4149; background: #2c343c; z-index: -1; }
.active { z-index: 0; }
.active::after { left: 18px; width: 20px; background: #4cc2ff; }
.tray { display: flex; align-items: center; margin-left: auto; padding-right: 25px; }
.cloud { margin-left: 22px; }
.lang { width: 44px; margin: -2px 0 0 15px; text-align: center; letter-spacing: -.3px; }
.wifi { margin-left: 14px; }
.volume { margin-left: 8px; }
.battery { margin-left: 8px; }
.clock { width: 80px; margin: -4px 0 0 18px; display: flex; flex-direction: column; align-items: flex-end; letter-spacing: -.05px; }
.date { white-space: nowrap; }
.count { width: 20px; height: 20px; margin-left: 9px; border-radius: 50%; background: #4cc2ff; color: #102a38; font-size: 13px; text-align: center; }
```
